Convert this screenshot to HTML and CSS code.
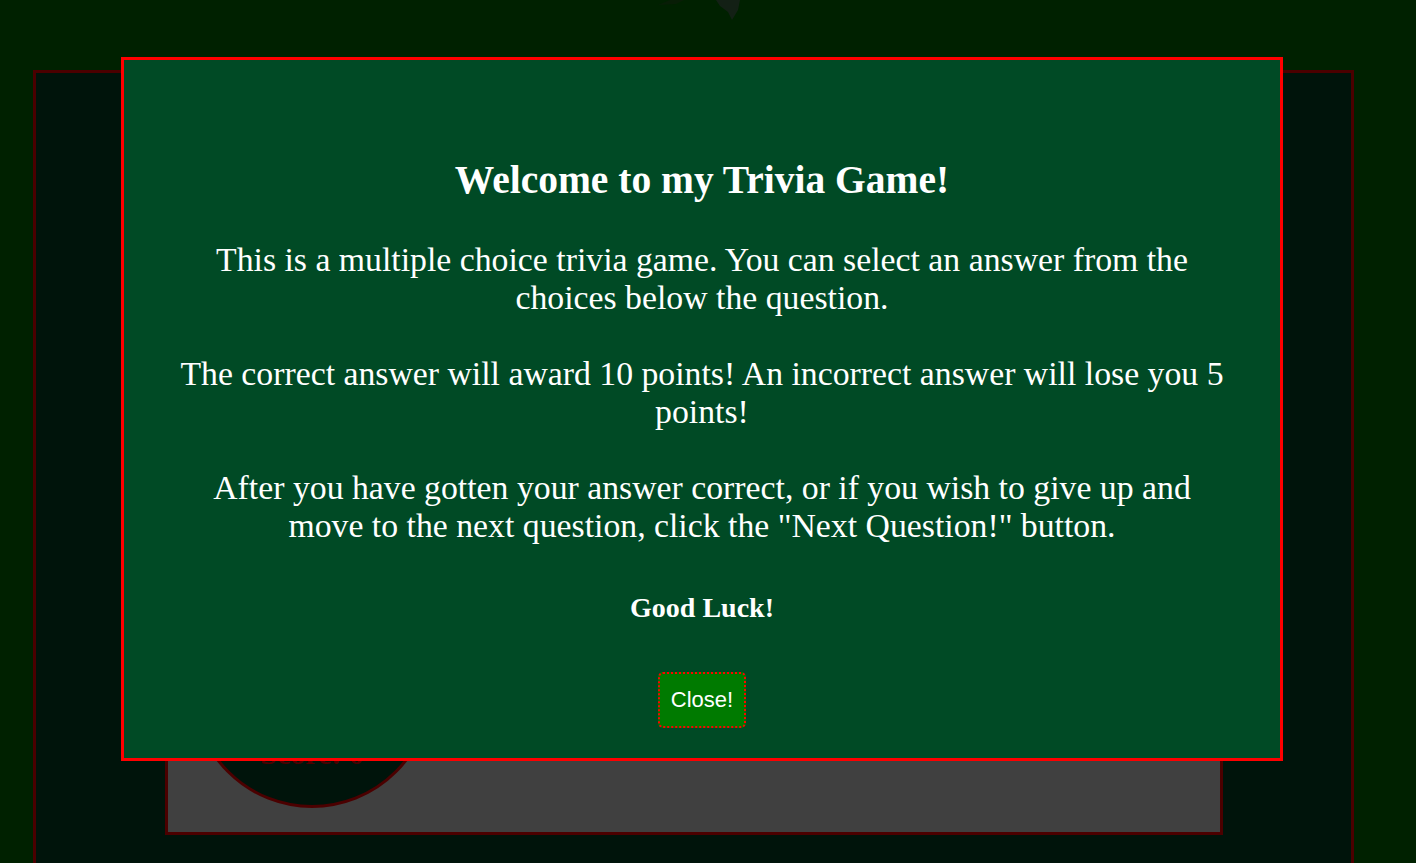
FILE: index.html
```html
<!DOCTYPE html>
<html>
<head>
<meta charset="utf-8">
<title>Trivia Game</title>
<link rel="stylesheet" href="styles.css">
</head>
<body>
<header class="top">
  <svg class="logo" width="100" height="24" viewBox="0 0 100 24">
    <path d="M0 5 L12 0 L26 0 L18 4 Z" fill="#0b1c08" opacity="0.7"/>
    <path d="M58 0 L82 0 L80 10 L74 20 L70 12 L62 6 Z" fill="#18201a" opacity="0.8"/>
  </svg>
</header>
<main class="game">
  <section class="board">
    <div class="score-circle"><span class="score-text">Score: 0</span></div>
  </section>
</main>
<div class="modal">
  <div class="modal-body">
    <h1 class="modal-title">Welcome to my Trivia Game!</h1>
    <p class="modal-text">This is a multiple choice trivia game. You can select an answer from the choices below the question.<br><br>The correct answer will award 10 points! An incorrect answer will lose you 5 points!<br><br>After you have gotten your answer correct, or if you wish to give up and move to the next question, click the "Next Question!" button.</p>
    <h3 class="modal-luck">Good Luck!</h3>
    <button class="close-btn">Close!</button>
  </div>
</div>
</body>
</html>
```

FILE: styles.css
```css
html, body {
  margin: 0;
  padding: 0;
  height: 100%;
}
body {
  background: #002100;
  font-family: "Liberation Serif", "Times New Roman", serif;
  overflow: hidden;
}
.top {
  height: 70px;
  display: flex;
  justify-content: center;
}
.logo {
  margin-left: 0;
}
.game {
  margin: 0 62px 0 33px;
  height: 820px;
  background: #00140b;
  border: 3px solid #4b0000;
  box-sizing: border-box;
  padding: 0 128px 0 129px;
}
.board {
  margin-top: 0;
  height: 762px;
  background: #404040;
  border: 3px solid #4b0000;
  border-top: none;
  box-sizing: border-box;
  padding: 495px 0 0 24px;
}
.score-circle {
  width: 240px;
  height: 240px;
  border-radius: 50%;
  background: #00140b;
  border: 3px solid #4b0000;
  box-sizing: border-box;
  display: flex;
  justify-content: center;
  align-items: flex-end;
  padding-bottom: 34px;
}
.score-text {
  color: #4b0000;
  font-size: 30px;
  font-weight: bold;
}
.modal {
  position: fixed;
  left: 121px;
  top: 57px;
  width: 1162px;
  height: 704px;
  box-sizing: border-box;
  background: #004a25;
  border: 3px solid #ff0000;
}
.modal-body {
  padding: 97px 52px 0;
  text-align: center;
  color: #ffffff;
}
.modal-title {
  font-size: 39.5px;
  font-weight: bold;
  margin: 0 0 38px;
}
.modal-text {
  font-size: 33.75px;
  line-height: 38px;
  margin: 0;
}
.modal-luck {
  font-size: 28px;
  font-weight: bold;
  margin: 47px 0 48px;
}
.close-btn {
  font-family: "Liberation Sans", Arial, sans-serif;
  font-size: 22px;
  color: #ffffff;
  background: #007a00;
  border: 2px dotted #ff0000;
  border-radius: 5px;
  padding: 13px 11px;
}
```
